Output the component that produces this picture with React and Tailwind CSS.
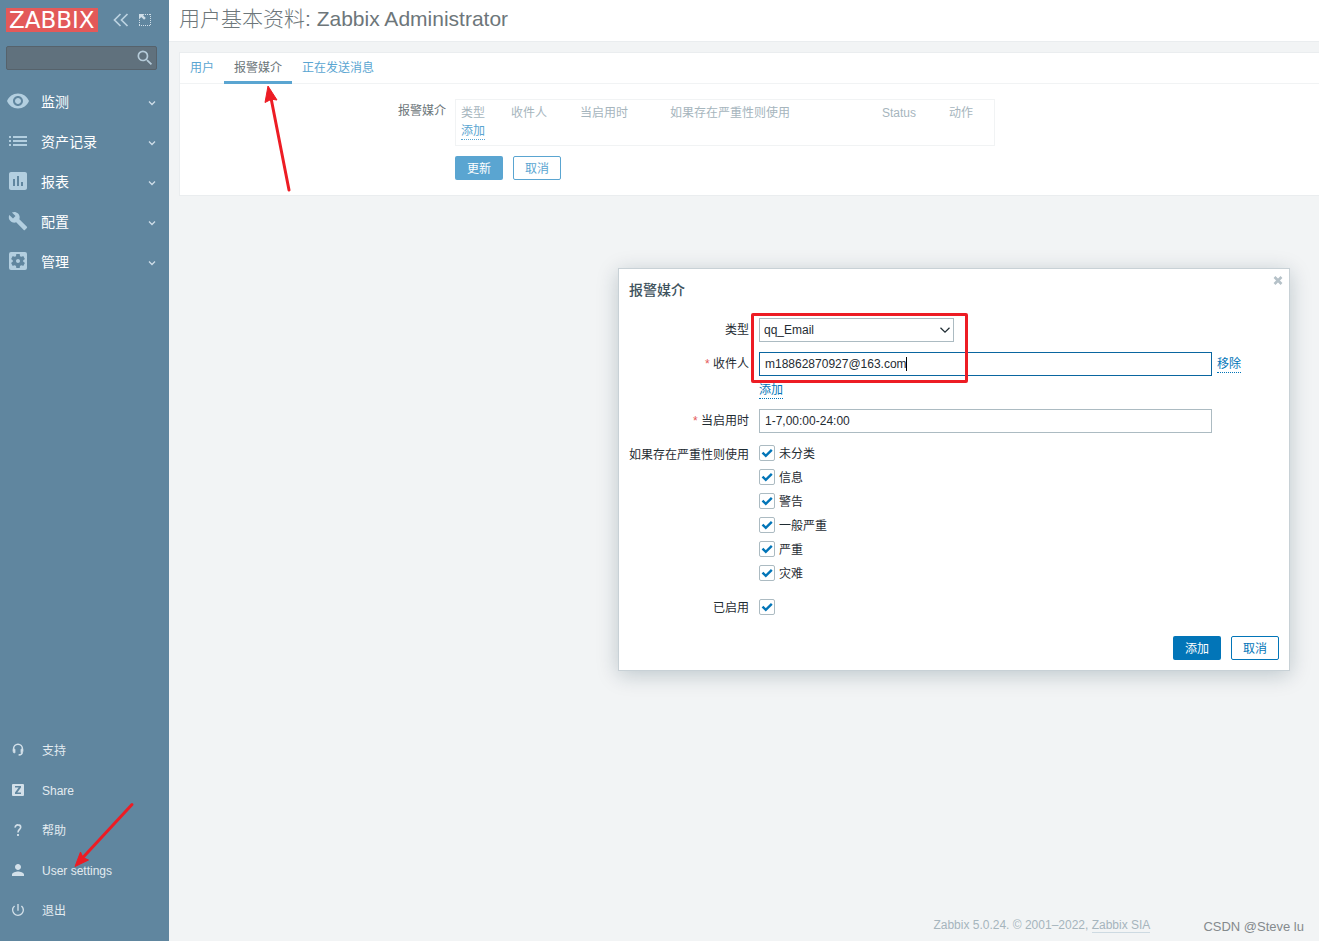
import React from 'react';
import {
  MdVisibility,
  MdInsertChart,
  MdBuild,
  MdSettingsApplications,
  MdPerson,
  MdPowerSettingsNew,
  MdSearch,
} from 'react-icons/md';

const ListIcon = () => (
  <svg width="18" height="12" viewBox="0 0 18 12" fill="currentColor">
    <path d="M0 1h2v2H0zM4 1h14v2H4zM0 5h2v2H0zM4 5h14v2H4zM0 9h2v2H0zM4 9h14v2H4z" />
  </svg>
);

const mainMenu = [
  { name: '监测', icon: MdVisibility, size: 24 },
  { name: '资产记录', icon: ListIcon },
  { name: '报表', icon: MdInsertChart, size: 24 },
  { name: '配置', icon: MdBuild, size: 20 },
  { name: '管理', icon: MdSettingsApplications, size: 24 },
];

const SupportIcon = () => (
  <svg width="12" height="14" viewBox="0 0 12 14" fill="none" stroke="currentColor" strokeWidth="1.5">
    <path d="M1.6 8V5.6a4.4 4.4 0 0 1 8.8 0V8" />
    <path d="M1.200 6.200h1.800v3.600H2.200a1 1 0 0 1-1-1zM10.800 6.200H9v3.600h.8a1 1 0 0 0 1-1z" fill="currentColor" strokeWidth="0.8" />
    <path d="M10.2 9.4c0 1.6-.9 2.4-3.6 2.6" />
  </svg>
);

const ShareIcon = () => (
  <svg width="12" height="12" viewBox="0 0 12 12">
    <path fillRule="evenodd" fill="currentColor" d="M1 0h10a1 1 0 0 1 1 1v10a1 1 0 0 1-1 1H1a1 1 0 0 1-1-1V1a1 1 0 0 1 1-1zM3 2v1.6h3.7L3 8.6V10h6V8.4H5.3L9 3.4V2z" />
  </svg>
);

const HelpIcon = () => (
  <svg width="8" height="12" viewBox="0 0 8 12" fill="none" stroke="currentColor" strokeWidth="1.6">
    <path d="M1.200 3.600A2.600 2.600 0 0 1 4 .9c1.600 0 2.700.9 2.700 2.400C6.700 5.400 4 5.600 4 8.400" />
    <path d="M4 10v2" strokeWidth="1.8" />
  </svg>
);

const userMenu = [
  { name: '支持', icon: SupportIcon },
  { name: 'Share', icon: ShareIcon },
  { name: '帮助', icon: HelpIcon },
  { name: 'User settings', icon: MdPerson, size: 18 },
  { name: '退出', icon: MdPowerSettingsNew, size: 16 },
];

const severities = ['未分类', '信息', '警告', '一般严重', '严重', '灾难'];

const Chevron = ({ className, size = 8 }) => (
  <svg className={className} width={size} height={size} viewBox="0 0 8 8" fill="none" stroke="currentColor" strokeWidth={size > 8 ? 0.8 : 1.3}>
    <path d="M1 2.500l3 3 3-3" />
  </svg>
);

const Sidebar = () => (
  <aside className="flex w-[169px] shrink-0 flex-col bg-[#60869f]">
    <div className="flex items-center px-1.5 pt-2">
      <a href="#home" className="bg-[#e35959] px-[3px] font-['DejaVu_Sans'] text-[23px] leading-6 text-white">
        ZABBIX
      </a>
      <button type="button" title="Collapse sidebar" className="ml-[15px] text-[#bcd2e0]">
        <svg width="16" height="14" viewBox="0 0 16 14" fill="none" stroke="currentColor" strokeWidth="1.700">
          <path d="M7.500 1L1.500 7l6 6M14.500 1l-6 6 6 6" />
        </svg>
      </button>
      <button type="button" title="Hide sidebar" className="ml-2.5 text-[#cfdee8]">
        <svg width="12" height="12" viewBox="0 0 12 12" fill="none" stroke="currentColor">
          <path d="M6 .5h6M.5 6v6M0 11.500h12M11.500 0v12" strokeDasharray="1 1" />
          <path d="M0 0h5.500L4.200 1.400l2.600 2.600-1.700 1.700-2.900-2.800L0 5.500z" fill="currentColor" stroke="none" />
        </svg>
      </button>
    </div>

    <form className="relative mx-1.5 mt-3.5 mr-3">
      <input
        type="text"
        aria-label="Search"
        className="block h-6 w-full rounded-xs border border-[#56626b] bg-[#60717d] pr-7 pl-1.5 text-xs text-white outline-none"
      />
      <button type="button" title="Search" className="absolute top-0.5 right-0.5 text-[#b5cbd9]">
        <MdSearch size={20} />
      </button>
    </form>

    <nav className="mt-[11px]">
      {mainMenu.map((item) => (
        <a key={item.name} href="#menu" className="flex h-10 items-center pr-[13px] text-sm text-white">
          <span className="flex w-9 shrink-0 justify-center text-[#b3cfe0]">
            <item.icon size={item.size} />
          </span>
          <span className="ml-[5px] flex-1 pt-px">{item.name}</span>
          <Chevron className="mt-1 text-[#cfdee8]" />
        </a>
      ))}
    </nav>

    <nav className="mt-auto pb-[11px]">
      {userMenu.map((item) => (
        <a key={item.name} href="#user" className="flex h-10 items-center text-xs text-[#e3ebf0]">
          <span className="flex w-9 shrink-0 justify-center text-[#d3e0e9]">
            <item.icon size={item.size} />
          </span>
          <span className="ml-1.5 pt-0.5">{item.name}</span>
        </a>
      ))}
    </nav>
  </aside>
);

const ProfileForm = () => (
  <section className="mt-2.5 ml-2.5 border border-r-0 border-[#eaedef] bg-white">
    <div className="flex h-[31px] border-b border-[#f1f3f4] text-[#5aa5d1]">
      <a href="#user" className="px-2.5 leading-[30px]">用户</a>
      <a href="#media" className="-mb-px border-b-3 border-[#5aa5d1] px-2.5 leading-[30px] text-[#6d767a]">报警媒介</a>
      <a href="#messaging" className="px-2.5 leading-[30px]">正在发送消息</a>
    </div>

    <div className="flex gap-[9px] py-[15px]">
      <div className="w-[266px] shrink-0 pt-1 text-right">报警媒介</div>
      <div>
        <div className="border border-[#f1f3f4] px-[5px] pt-1 pb-[5px]">
          <table className="w-[528px] table-fixed text-left leading-[18px]">
            <thead>
              <tr className="text-[#a6b5bd]">
                <th className="w-[50px] font-normal">类型</th>
                <th className="w-[69px] font-normal">收件人</th>
                <th className="w-[90px] font-normal">当启用时</th>
                <th className="w-[212px] font-normal">如果存在严重性则使用</th>
                <th className="w-[67px] font-normal">Status</th>
                <th className="font-normal">动作</th>
              </tr>
            </thead>
            <tbody>
              <tr>
                <td colSpan={6}>
                  <button type="button" className="border-b border-dotted border-[#5aa5d1] leading-4 text-[#5aa5d1]">添加</button>
                </td>
              </tr>
            </tbody>
          </table>
        </div>
        <div className="mt-2.5 flex gap-2.5">
          <button type="button" className="h-6 w-12 rounded-xs bg-[#5aa5d1] pt-0.5 text-white">更新</button>
          <button type="button" className="h-6 w-12 rounded-xs border border-[#5aa5d1] pt-0.5 text-[#5aa5d1]">取消</button>
        </div>
      </div>
    </div>
  </section>
);

const CheckBox = ({ label, id }) => (
  <label htmlFor={id} className="flex h-4 w-fit items-center gap-1">
    <span className="relative block size-4">
      <input
        id={id}
        type="checkbox"
        defaultChecked
        aria-label={label || '已启用'}
        className="peer block size-4 appearance-none rounded-xs border border-[#acbbc2] bg-white"
      />
      <svg className="pointer-events-none absolute inset-0 hidden text-[#0275b8] peer-checked:block" width="16" height="16" viewBox="0 0 16 16" fill="none" stroke="currentColor" strokeWidth="2.400">
        <path d="M3.500 7.600l3.300 3.300 6-6" />
      </svg>
    </span>
    <span className="pt-0.5">{label}</span>
  </label>
);

const Required = () => <span className="text-[#e45959]">* </span>;

const MediaDialog = () => (
  <div
    role="dialog"
    aria-label="报警媒介"
    className="absolute top-[268px] right-[29px] w-[672px] border border-[#c8d1d6] bg-white px-2.5 pb-2.5 text-[#1f2c33] shadow-[0_4px_20px_rgba(0,40,60,0.22)]"
  >
    <button type="button" title="关闭" className="absolute top-[7px] right-1.5 text-[#b5c1c8]">
      <svg width="10" height="9" viewBox="0 0 10 9" stroke="currentColor" strokeWidth="2.600">
        <path d="M1.500 1l7 7M8.500 1l-7 7" />
      </svg>
    </button>
    <h4 className="pt-3 text-sm leading-[18px] font-medium text-[#3f535e]">报警媒介</h4>

    <form>
      <div className="mt-[19px] grid grid-cols-[120px_1fr] gap-x-2.5 gap-y-2.5 leading-6">
        <label htmlFor="type" className="text-right">类型</label>
        <div className="relative w-[195px]">
          <select id="type" defaultValue="qq_Email" className="block h-6 w-full appearance-none border border-[#acbbc2] bg-white pl-1 leading-5 outline-none">
            <option>qq_Email</option>
          </select>
          <Chevron size={12} className="pointer-events-none absolute top-1.5 right-[3px]" />
        </div>

        <label htmlFor="sendto" className="text-right"><Required />收件人</label>
        <div>
          <div className="flex items-center gap-[5px]">
            <div className="relative">
              <input
                id="sendto"
                type="text"
                defaultValue="m18862870927@163.com"
                className="block h-6 w-[453px] border border-[#0a66a0] bg-white px-[5px] outline-none"
              />
              <span className="absolute top-[5px] left-[147px] h-3.5 w-px bg-black" />
            </div>
            <button type="button" className="border-b border-dotted border-[#0275b8] leading-4 text-[#0275b8]">移除</button>
          </div>
          <button type="button" className="mt-1.5 block border-b border-dotted border-[#0275b8] leading-4 text-[#0275b8]">添加</button>
        </div>

        <label htmlFor="period" className="text-right"><Required />当启用时</label>
        <input
          id="period"
          type="text"
          defaultValue="1-7,00:00-24:00"
          className="block h-6 w-[453px] border border-[#acbbc2] bg-white px-[5px] outline-none"
        />

        <div className="text-right leading-6">如果存在严重性则使用</div>
        <div className="flex flex-col gap-2 pt-0.5 pb-2">
          {severities.map((name, i) => (
            <CheckBox key={name} id={`severity-${i}`} label={name} />
          ))}
        </div>

        <label htmlFor="active" className="text-right leading-[18px]">已启用</label>
        <CheckBox id="active" />
      </div>

      <div className="mt-[19px] flex justify-end gap-2.5">
        <button type="button" className="h-6 w-12 rounded-xs bg-[#0275b8] pt-0.5 text-white">添加</button>
        <button type="button" className="h-6 w-12 rounded-xs border border-[#0275b8] pt-0.5 text-[#0275b8]">取消</button>
      </div>
    </form>
  </div>
);

// Red markers drawn over the page
const Annotations = () => (
  <>
    <svg className="pointer-events-none absolute top-[84px] left-[260px] text-[#ed1c24]" width="34" height="110" viewBox="260 84 34 110">
      <path d="M289 190L271 98" stroke="currentColor" strokeWidth="3" strokeLinecap="round" />
      <path d="M268 86l9 14-5.500-.8L265 102.500z" fill="currentColor" stroke="currentColor" strokeLinejoin="round" />
    </svg>
    <svg className="pointer-events-none absolute top-[800px] left-[72px] text-[#ed1c24]" width="64" height="68" viewBox="72 800 64 68">
      <path d="M132 804.500L82 858.500" stroke="currentColor" strokeWidth="3" strokeLinecap="round" />
      <path d="M75 866.500l5.500-14.500 2.500 5.500 5.500 2.500z" fill="currentColor" stroke="currentColor" strokeLinejoin="round" />
    </svg>
    <div className="pointer-events-none absolute top-[313px] right-[351px] h-[70px] w-[217px] rounded-xs border-3 border-[#ed1c24]" />
  </>
);

const App = () => {
  return (
    <div className="relative flex min-h-screen overflow-hidden bg-[#f2f4f5] font-['Liberation_Sans','Noto_Sans_CJK_SC',sans-serif] text-xs text-[#6d767a]">
      <Sidebar />
      <main className="flex min-w-0 flex-1 flex-col">
        <header className="border-b border-[#eaedef] bg-white px-2.5 pt-[5px] pb-2">
          <h1 className="text-[21px] leading-7 font-light">用户基本资料: Zabbix Administrator</h1>
        </header>
        <ProfileForm />
        <footer className="mt-auto flex items-start justify-end gap-[53px] pr-[15px] pb-1.5 leading-4 text-[#a6b5bd]">
          <span>
            Zabbix 5.0.24. © 2001–2022, <a href="#sia" className="border-b border-[#cddae2]">Zabbix SIA</a>
          </span>
          <span className="pt-0.5 text-[13px] text-[#858a8d]">CSDN @Steve lu</span>
        </footer>
      </main>
      <MediaDialog />
      <Annotations />
    </div>
  );
};

export default App;
